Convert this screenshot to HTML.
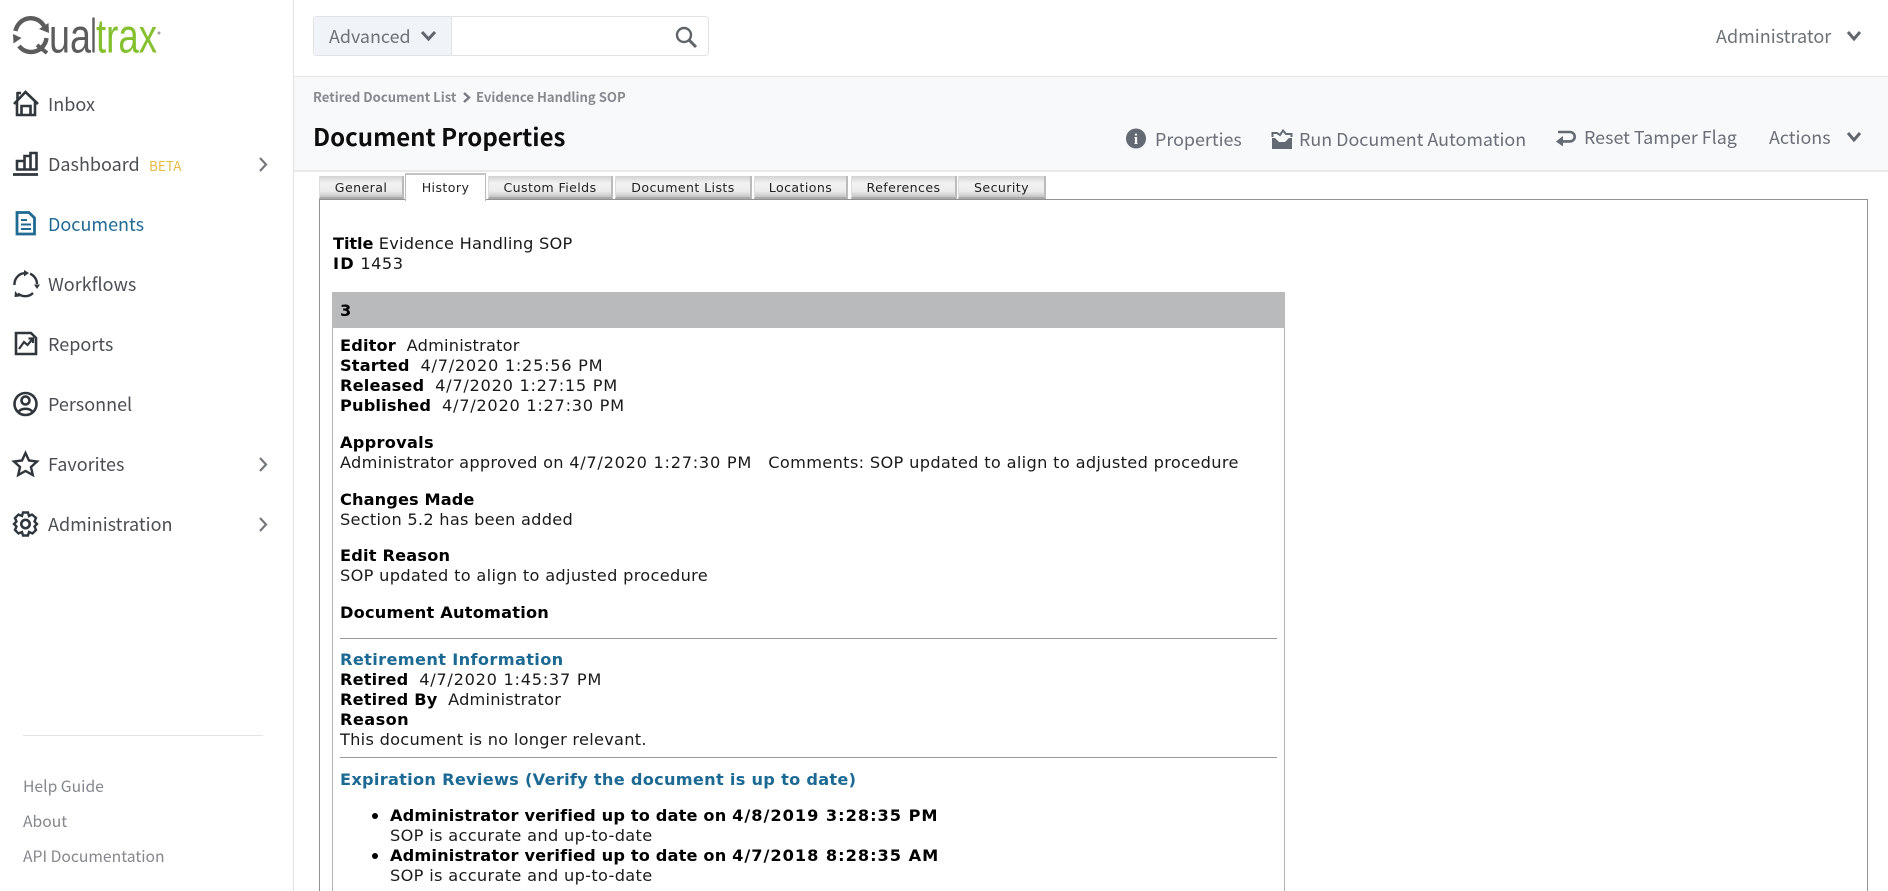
<!DOCTYPE html>
<html><head><meta charset="utf-8"><title>Document Properties</title>
<style>
html,body{margin:0;padding:0;width:1888px;height:891px;overflow:hidden;background:#fff}
#w{position:absolute;left:0;top:0;width:1888px;height:891px;overflow:hidden;background:#fff}
.a{position:absolute;white-space:nowrap}
.u{font-family:"Noto Sans CJK SC","Liberation Sans",sans-serif;line-height:30px}
.n{font-size:18px;color:#4b4f54;left:48px}
.f{font-size:15.7px;color:#84888c;left:23px}
.r{font-size:17.9px;color:#6b7078}
.v{font-family:"DejaVu Sans","Liberation Sans",sans-serif;font-size:16.2px;letter-spacing:.28px;line-height:20px;color:#1a1a1a;left:340px;margin-top:1px}
.v b{color:#000;letter-spacing:.15px}
.v i{font-style:normal;letter-spacing:.72px}
.v b i{letter-spacing:.97px}
.tab{position:absolute;top:176px;height:23px;box-sizing:border-box;background:linear-gradient(#d2d2d2,#f2f2f2 35%,#ececec 72%,#c4c4c4);border-bottom:2px solid #aaa;border-left:1px solid #ddd;border-right:2px solid #bbb;font:12.6px/23px "DejaVu Sans",sans-serif;color:#222;text-align:center;letter-spacing:.4px}
svg{position:absolute;left:0;top:0;overflow:hidden}
</style></head><body><div id="w">
<div class="a" style="left:293px;top:0;width:1px;height:891px;background:#dfe0e2"></div>
<div class="a" style="left:294px;top:76px;width:1594px;height:93px;background:#f8f9fb;border-top:1px solid #e4e6e8;border-bottom:2px solid #e8e9ea"></div>

<div class="a" style="left:313px;top:16px;width:394px;height:38px;border:1px solid #dfe2e6;border-radius:4px;background:#fff"></div>
<div class="a" style="left:314px;top:17px;width:137px;height:38px;background:#f0f3f8;border-right:1px solid #dfe2e6;border-radius:4px 0 0 4px"></div>
<div class="a u" style="left:329px;top:21px;font-size:17.9px;color:#6d7277">Advanced</div>
<div class="a u" style="left:1716px;top:21px;font-size:18px;color:#6d7277">Administrator</div>
<div class="a u" style="left:313px;top:82px;font-size:13.1px;font-weight:700;color:#868a8f">Retired Document List</div>
<div class="a u" style="left:476px;top:82px;font-size:13.1px;font-weight:700;color:#868a8f">Evidence Handling SOP</div>
<div class="a u" style="left:313px;top:121px;font-size:24px;font-weight:700;color:#0d0d0d">Document Properties</div>
<div class="a u r" style="left:1155px;top:124px">Properties</div>
<div class="a u r" style="left:1299px;top:124px">Run Document Automation</div>
<div class="a u r" style="left:1584px;top:122px">Reset Tamper Flag</div>
<div class="a u r" style="left:1769px;top:122px">Actions</div>

<div class="a u n" style="top:89px">Inbox</div>
<div class="a u n" style="top:149px">Dashboard</div>
<div class="a u" style="left:149px;top:150px;font-size:13.5px;color:#e6bc45">BETA</div>
<div class="a u n" style="top:209px;color:#1f6a93">Documents</div>
<div class="a u n" style="top:269px">Workflows</div>
<div class="a u n" style="top:329px">Reports</div>
<div class="a u n" style="top:389px">Personnel</div>
<div class="a u n" style="top:449px">Favorites</div>
<div class="a u n" style="top:509px">Administration</div>
<div class="a" style="left:23px;top:735px;width:240px;height:1px;background:#e4e5e6"></div>
<div class="a u f" style="top:770.5px">Help Guide</div>
<div class="a u f" style="top:805.5px">About</div>
<div class="a u f" style="top:840.5px">API Documentation</div>

<div class="a" style="left:319px;top:199px;width:1549px;height:720px;box-sizing:border-box;border:1px solid #929292"></div>
<div class="tab" style="left:319px;width:85px">General</div>
<div class="a" style="left:405px;top:173px;width:81px;height:28px;box-sizing:border-box;background:#fff;border:1px solid #bbb;border-bottom:0;border-top:2px solid #c4c4c4;font:12.6px/26px 'DejaVu Sans',sans-serif;color:#222;text-align:center;letter-spacing:.4px">History</div>
<div class="tab" style="left:488px;width:125px">Custom Fields</div>
<div class="tab" style="left:615px;width:137px">Document Lists</div>
<div class="tab" style="left:754px;width:94px">Locations</div>
<div class="tab" style="left:851px;width:106px">References</div>
<div class="tab" style="left:958px;width:88px">Security</div>

<div class="a v" style="left:333px;top:233px;letter-spacing:.23px"><b style="letter-spacing:-.1px">Title</b> Evidence Handling SOP</div>
<div class="a v" style="left:333px;top:253px"><b style="letter-spacing:1.2px">ID</b> <span style="letter-spacing:.5px">1453</span></div>

<div class="a" style="left:332px;top:292px;width:953px;height:640px;box-sizing:border-box;border:1px solid #b4b4b4"></div>
<div class="a" style="left:332px;top:292px;width:953px;height:36px;background:#b9babc"></div>
<div class="a v" style="top:300px"><b>3</b></div>
<div class="a v" style="top:335px;letter-spacing:.2px"><b>Editor</b>&nbsp; Administrator</div>
<div class="a v" style="top:355px"><b>Started</b>&nbsp; <i>4/7/2020 1:25:56 PM</i></div>
<div class="a v" style="top:375px"><b>Released</b>&nbsp; <i>4/7/2020 1:27:15 PM</i></div>
<div class="a v" style="top:395px"><b>Published</b>&nbsp; <i>4/7/2020 1:27:30 PM</i></div>
<div class="a v" style="top:432px"><b style="letter-spacing:.27px">Approvals</b></div>
<div class="a v" style="top:452px;letter-spacing:.26px">Administrator approved on <i>4/7/2020 1:27:30 PM</i> &nbsp; <span style="letter-spacing:.33px">Comments: SOP updated to align to adjusted procedure</span></div>
<div class="a v" style="top:489px"><b style="letter-spacing:.1px">Changes Made</b></div>
<div class="a v" style="top:509px;letter-spacing:.26px">Section 5.2 has been added</div>
<div class="a v" style="top:545px"><b style="letter-spacing:.18px">Edit Reason</b></div>
<div class="a v" style="top:565px;letter-spacing:.31px">SOP updated to align to adjusted procedure</div>
<div class="a v" style="top:602px"><b style="letter-spacing:.21px">Document Automation</b></div>
<div class="a" style="left:340px;top:638px;width:937px;height:1px;background:#999"></div>
<div class="a v" style="top:649px"><b style="color:#1c6a94;letter-spacing:.35px">Retirement Information</b></div>
<div class="a v" style="top:669px"><b>Retired</b>&nbsp; <i>4/7/2020 1:45:37 PM</i></div>
<div class="a v" style="top:689px;letter-spacing:.2px"><b style="letter-spacing:.16px">Retired By</b>&nbsp; Administrator</div>
<div class="a v" style="top:709px"><b style="letter-spacing:.4px">Reason</b></div>
<div class="a v" style="top:729px;letter-spacing:.27px">This document is no longer relevant.</div>
<div class="a" style="left:340px;top:757px;width:937px;height:1px;background:#999"></div>
<div class="a v" style="top:769px"><b style="color:#1c6a94;letter-spacing:.27px">Expiration Reviews (Verify the document is up to date)</b></div>
<div class="a" style="left:372px;top:813px;width:6px;height:6px;border-radius:50%;background:#000"></div>
<div class="a v" style="left:390px;top:805px"><b>Administrator verified up to date on <i>4/8/2019 3:28:35 PM</i></b></div>
<div class="a v" style="left:390px;top:825px;letter-spacing:.32px">SOP is accurate and up-to-date</div>
<div class="a" style="left:372px;top:853px;width:6px;height:6px;border-radius:50%;background:#000"></div>
<div class="a v" style="left:390px;top:845px"><b>Administrator verified up to date on <i>4/7/2018 8:28:35 AM</i></b></div>
<div class="a v" style="left:390px;top:865px;letter-spacing:.32px">SOP is accurate and up-to-date</div>

<svg width="1888" height="891" viewBox="0 0 1888 891" fill="none">
 <!-- logo -->
 <g stroke="#5c5c5c" stroke-width="4.400" fill="none">
  <path d="M15.500 31 A15.500 16 0 0 1 44 26"/>
  <path d="M46.500 38 A15.500 16 0 0 1 19 46"/>
  <path d="M37 45 L47 53" stroke-width="4"/>
 </g>
 <path d="M39 29 L48.500 23 L49 33 Z M13 34 L21.500 38 L13.500 43.500 Z" fill="#5c5c5c"/>
 <text x="49" y="52.500" font-family="Liberation Sans" font-size="48" fill="#5c5c5c" textLength="42" lengthAdjust="spacingAndGlyphs">ua</text>
 <text x="90.500" y="52.500" font-family="Liberation Sans" font-size="48" fill="#5c5c5c" textLength="6" lengthAdjust="spacingAndGlyphs">l</text>
 <text x="96" y="52.500" font-family="Liberation Sans" font-size="48" fill="#85c02e" textLength="61" lengthAdjust="spacingAndGlyphs">trax</text>
 <circle cx="159" cy="33" r="1.500" fill="#a0a0a0"/>

 <!-- sidebar icons -->
 <g stroke="#2f363c" stroke-width="2.600" fill="none">
  <path d="M14 104 L25.500 92 L38 104"/>
  <path d="M17 93 h4 M17.500 92 v8"/>
  <path d="M17 101 V115 H35 V101"/>
  <path d="M21.500 115 V106 H30.500 V115"/>
  <path d="M17 170 V161 H24.500 V170 M24.500 170 V156 H30.500 M30.500 170 V153 H36.500 V170 M16 169.500 H37.500"/>
  <path d="M13 174.500 H38" stroke-width="2.800"/>
  <path d="M14.500 285 A11 11 0 0 1 24 273.200 M30 273.800 A11 11 0 0 1 37 284 M33 293 A11 11 0 0 1 18 293.500" stroke-width="2.400"/>
  <path d="M16 333 H31 L36 338 V354 H16 Z"/>
  <path d="M19 349 L24 342 L27.500 345 L32.500 339 M28.500 338.500 H33 V343" stroke-width="2.200"/>
  <circle cx="25.500" cy="404" r="11"/>
  <circle cx="25.500" cy="400.500" r="4"/>
  <path d="M18 412.500 C21 407.500 30 407.500 33 412.500"/>
  <path d="M25.500 453 L29 460.500 L37 461.500 L31 467 L32.800 475 L25.500 471 L18.200 475 L20 467 L14 461.500 L22 460.500 Z" stroke-width="2.400"/>
  <circle cx="25.500" cy="524" r="4.200"/>
  <path d="M23 512.500 H28 L29 516 L32 514.500 L36 518 L34.500 521.500 L37 524 L34.500 526.500 L36 530 L32.500 533.500 L29 532 L28 535.500 H23 L22 532 L18.500 533.500 L15 530 L16.500 526.500 L14 524 L16.500 521.500 L15 518 L18.500 514.500 L22 516 Z" stroke-width="2.400"/>
 </g>
 <path d="M24 270 L29 273 L24 276.500 Z M34 284.500 L40 284.500 L37 289 Z M15 291 L20 296.500 L14.500 297 Z" fill="#2f363c"/>
 <g stroke="#1f6a93" stroke-width="2.800" fill="none">
  <path d="M17 212.500 H29 L34.500 218 V234 H17 Z"/>
  <path d="M21 220 H27 M21 224.500 H31 M21 229 H31" stroke-width="2"/>
 </g>
 <!-- chevrons -->
 <g stroke="#74787d" stroke-width="2.200" fill="none">
  <path d="M260 158 L266 164.500 L260 171"/>
  <path d="M260 458 L266 464.500 L260 471"/>
  <path d="M260 518 L266 524.500 L260 531"/>
 </g>
 <g stroke="#61666c" stroke-width="3" fill="none">
  <path d="M422 32 L428.500 39 L435 32"/>
  <path d="M1848 32 L1854 39 L1860 32"/>
  <path d="M1848 133 L1854 140 L1860 133"/>
 </g>
 <path d="M464 93 L469 97.500 L464 102" stroke="#777c81" stroke-width="2.400"/>
 <!-- search -->
 <circle cx="684" cy="35" r="7" stroke="#5f6469" stroke-width="2.400"/>
 <path d="M689 40 L696 47" stroke="#5f6469" stroke-width="3"/>
 <!-- action icons -->
 <circle cx="1136" cy="138.500" r="10" fill="#646a74"/>
 <text x="1136" y="144" text-anchor="middle" font-family="Liberation Serif" font-weight="700" font-size="15" fill="#fff">i</text>
 <path d="M1272.500 137 V133 H1277 L1280 135 L1283 130.500 L1286 134 H1291.500 V137" fill="none" stroke="#646a74" stroke-width="2"/>
 <path d="M1272 138 H1275 L1279 142 H1285 L1289 138 H1292 V149 H1272 Z" fill="#646a74"/>
 <path d="M1558 132 H1570 A4.700 4.700 0 0 1 1570 141.400 H1560" stroke="#646a74" stroke-width="2.600"/>
 <path d="M1563 136 L1556 141.500 L1563 146.500 Z" fill="#646a74"/>
</svg>
</div></body></html>
